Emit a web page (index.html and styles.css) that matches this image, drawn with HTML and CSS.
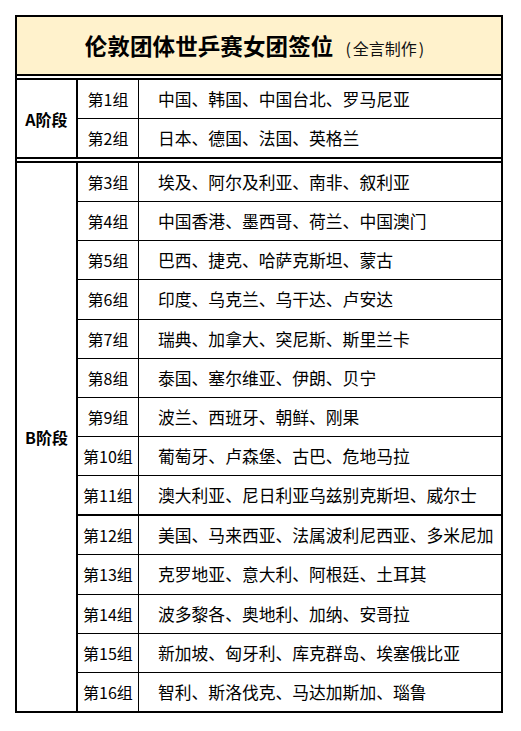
FILE: index.html
```html
<!DOCTYPE html>
<html lang="zh-CN">
<head>
<meta charset="utf-8">
<title>伦敦团体世乒赛女团签位</title>
<link rel="stylesheet" href="styles.css">
</head>
<body>
<div class="sheet">
  <div class="title"><span class="main">伦敦团体世乒赛女团签位</span><span class="sub"><span class="paren">(</span>全言制作<span class="paren">)</span></span></div>
  <div class="section sec-a">
    <div class="stage">A阶段</div>
    <div class="rows">
      <div class="row"><div class="grp">第1组</div><div class="teams">中国、韩国、中国台北、罗马尼亚</div></div>
      <div class="row"><div class="grp">第2组</div><div class="teams">日本、德国、法国、英格兰</div></div>
    </div>
  </div>
  <div class="section sec-b">
    <div class="stage">B阶段</div>
    <div class="rows">
      <div class="row"><div class="grp">第3组</div><div class="teams">埃及、阿尔及利亚、南非、叙利亚</div></div>
      <div class="row"><div class="grp">第4组</div><div class="teams">中国香港、墨西哥、荷兰、中国澳门</div></div>
      <div class="row"><div class="grp">第5组</div><div class="teams">巴西、捷克、哈萨克斯坦、蒙古</div></div>
      <div class="row"><div class="grp">第6组</div><div class="teams">印度、乌克兰、乌干达、卢安达</div></div>
      <div class="row"><div class="grp">第7组</div><div class="teams">瑞典、加拿大、突尼斯、斯里兰卡</div></div>
      <div class="row"><div class="grp">第8组</div><div class="teams">泰国、塞尔维亚、伊朗、贝宁</div></div>
      <div class="row"><div class="grp">第9组</div><div class="teams">波兰、西班牙、朝鲜、刚果</div></div>
      <div class="row"><div class="grp">第10组</div><div class="teams">葡萄牙、卢森堡、古巴、危地马拉</div></div>
      <div class="row"><div class="grp">第11组</div><div class="teams">澳大利亚、尼日利亚乌兹别克斯坦、威尔士</div></div>
      <div class="row row-thick"><div class="grp">第12组</div><div class="teams">美国、马来西亚、法属波利尼西亚、多米尼加</div></div>
      <div class="row"><div class="grp">第13组</div><div class="teams">克罗地亚、意大利、阿根廷、土耳其</div></div>
      <div class="row"><div class="grp">第14组</div><div class="teams">波多黎各、奥地利、加纳、安哥拉</div></div>
      <div class="row"><div class="grp">第15组</div><div class="teams">新加坡、匈牙利、库克群岛、埃塞俄比亚</div></div>
      <div class="row"><div class="grp">第16组</div><div class="teams">智利、斯洛伐克、马达加斯加、瑙鲁</div></div>
    </div>
  </div>
</div>
</body>
</html>
```
FILE: styles.css
```css
html, body {
  margin: 0;
  padding: 0;
  background: #fff;
}
body {
  font-family: "Noto Sans CJK SC", "Noto Sans", sans-serif;
  color: #000;
}
.sheet {
  margin: 15px 0 0 15px;
  width: 484px;
  border: 2px solid #000;
}
.title {
  height: 57px;
  background: #fff2cc;
  border-bottom: 2px solid #000;
  display: flex;
  align-items: baseline;
  justify-content: center;
  padding-right: 7px;
  line-height: 57px;
  gap: 10px;
}
.title .main {
  font-size: 22.5px;
  font-weight: bold;
  letter-spacing: 0.1px;
}
.title .sub {
  font-size: 16px;
  color: #111;
}
.title .paren {
  display: inline-block;
  margin: 0 2px;
}
.section {
  display: flex;
  border-top: 2px solid #000;
  margin-top: 2px;
}
.sec-a {
  border-bottom: 2px solid #000;
  height: 77px;
}
.sec-b {
  height: 548px;
}
.stage {
  width: 59px;
  border-right: 2px solid #000;
  display: flex;
  align-items: center;
  justify-content: center;
  font-size: 16px;
  font-weight: bold;
}
.rows {
  flex: 1;
  display: flex;
  flex-direction: column;
}
.row {
  flex: 1;
  display: flex;
}
.row + .row {
  border-top: 1px solid #000;
}
.row.row-thick {
  border-top: 2px solid #000;
}
.grp {
  width: 60px;
  border-right: 1px solid #000;
  display: flex;
  align-items: center;
  justify-content: center;
  font-size: 16px;
}
.teams {
  flex: 1;
  display: flex;
  align-items: center;
  padding-left: 19px;
  font-size: 16.8px;
  white-space: nowrap;
}
```
